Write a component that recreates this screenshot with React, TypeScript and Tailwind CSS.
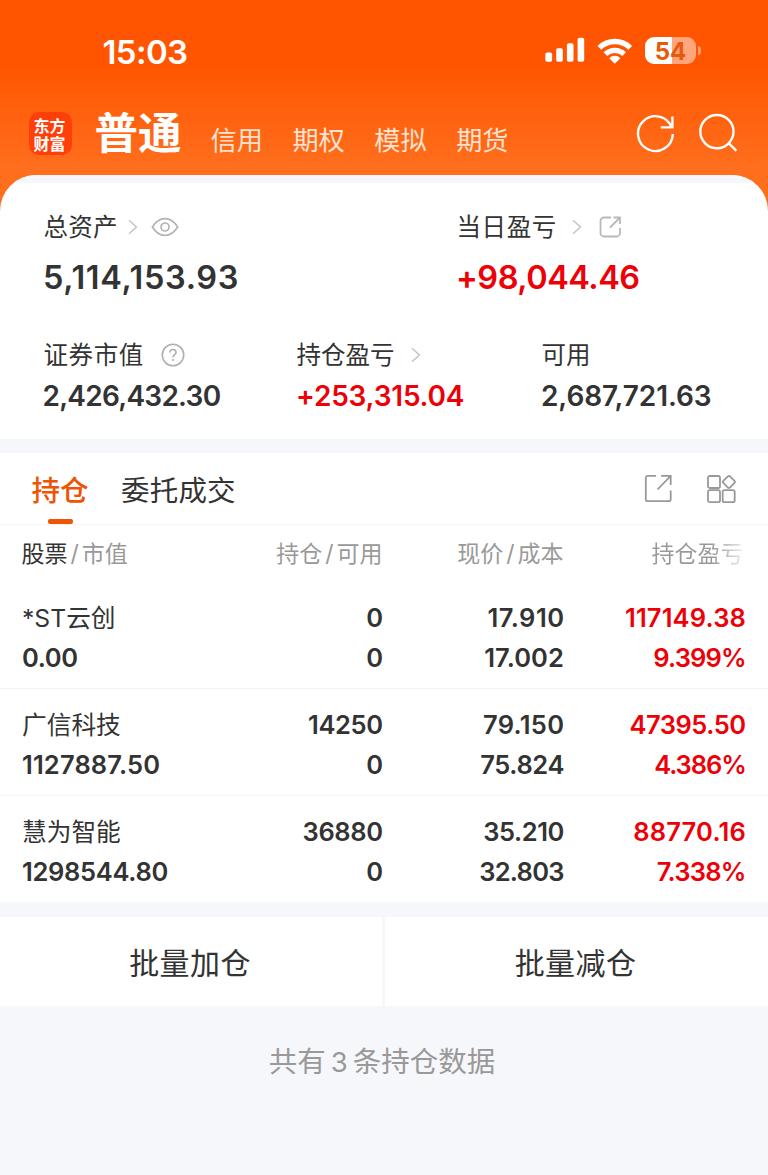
import React from "react";

const num = "font-['Inter','Noto_Sans_CJK_SC',sans-serif] font-semibold whitespace-nowrap";

type Cell = { text: string; track?: string };

type Holding = {
  name: string;
  value: Cell;
  amount: Cell;
  usable: Cell;
  price: Cell;
  cost: Cell;
  profit: Cell;
  rate: Cell;
};

const holdings: Holding[] = [
  {
    name: "*ST云创",
    value: { text: "0.00", track: "tracking-[-0.4px]" },
    amount: { text: "0" },
    usable: { text: "0" },
    price: { text: "17.910", track: "tracking-[0.5px] -mr-[0.5px]" },
    cost: { text: "17.002", track: "tracking-[0.1px]" },
    profit: { text: "117149.38", track: "tracking-[0.15px]" },
    rate: { text: "9.399%", track: "tracking-[-0.85px] mr-[0.3px]" },
  },
  {
    name: "广信科技",
    value: { text: "1127887.50", track: "tracking-[0.15px]" },
    amount: { text: "14250", track: "tracking-[-0.4px] mr-[0.4px]" },
    usable: { text: "0" },
    price: { text: "79.150", track: "tracking-[0.3px] -mr-[0.3px]" },
    cost: { text: "75.824", track: "tracking-[-0.4px]" },
    profit: { text: "47395.50", track: "tracking-[-0.5px] mr-[0.5px]" },
    rate: { text: "4.386%", track: "tracking-[-1.1px] mr-[0.3px]" },
  },
  {
    name: "慧为智能",
    value: { text: "1298544.80", track: "tracking-[-0.3px]" },
    amount: { text: "36880", track: "tracking-[-0.4px] mr-[0.4px]" },
    usable: { text: "0" },
    price: { text: "35.210", track: "tracking-[-0.4px]" },
    cost: { text: "32.803", track: "tracking-[-0.75px] mr-[0.3px]" },
    profit: { text: "88770.16", track: "tracking-[0.2px]" },
    rate: { text: "7.338%", track: "tracking-[-0.75px] mr-[0.3px]" },
  },
];

function Chevron({ className = "" }: { className?: string }) {
  return (
    <svg className={className} width="10" height="16" viewBox="0 0 10 16" fill="none" stroke="#c4c4c4" strokeWidth="1.5">
      <path d="M1 1.2 8.4 8 1 14.8" />
    </svg>
  );
}

function StatusBar() {
  return (
    <div className="flex h-[103px] items-start justify-between pl-[102.5px] pr-[67px]">
      <div className={`${num} mt-[32px] text-[33px] leading-[40px] tracking-[-0.6px]`}>15:03</div>
      <div className="mt-[37px] flex items-start">
        <svg width="40" height="26" viewBox="0 0 40 26" fill="#fff">
          <rect x="0.3" y="15.4" width="6.8" height="9.4" rx="1.8" />
          <rect x="11.2" y="11.2" width="6.6" height="13.6" rx="1.8" />
          <rect x="21.9" y="6.2" width="6.6" height="18.6" rx="1.8" />
          <rect x="32.6" y="0.7" width="6.6" height="24.1" rx="1.8" />
        </svg>
        <svg className="ml-[12px]" width="36" height="28" viewBox="0 0 36 28" fill="none" stroke="#fff" strokeWidth="5.3">
          <path d="M2.4 10.8a22 22 0 0 1 30.8 0" />
          <path d="M8.4 17.1a13.600 13.600 0 0 1 18.800 0" />
          <path d="M17.8 26.8 12.2 21.200a7.900 7.900 0 0 1 11.200 0z" fill="#fff" stroke="none" />
        </svg>
        <div className="ml-[12px] flex items-center">
          <div className="flex h-[27px] w-[51px] items-center justify-center rounded-[9px] bg-[linear-gradient(90deg,#fff_53%,#ffa67d_53%)]">
            <span className="mt-[1px] font-['Inter',sans-serif] text-[24px] font-bold leading-[27px] text-[#e8590c]">54</span>
          </div>
          <div className="ml-[1.5px] h-[9px] w-[3.5px] rounded-r-full bg-[#ff9a6a]" />
        </div>
      </div>
    </div>
  );
}

function NavBar() {
  return (
    <div className="flex h-[72px] items-start pl-[28.5px]">
      <div className="mt-[9px] flex size-[43px] items-center justify-center rounded-[10px] bg-[#ff3f0a] font-['Noto_Sans_CJK_SC',sans-serif]">
        <div className="w-[33px] text-[16px] font-bold leading-[18px]">东方财富</div>
      </div>
      <div className="ml-[23px] mt-[1px] text-[43.5px] font-bold leading-[58px]">普通</div>
      <div className="ml-[29px] mt-[20px] flex gap-[29.5px] text-[26.2px] leading-[36px] text-[#ffe2d2]">
        <span>信用</span>
        <span>期权</span>
        <span>模拟</span>
        <span>期货</span>
      </div>
      <svg className="ml-[127px] mt-[10px]" width="40" height="42" viewBox="0 0 40 42" fill="none" stroke="#fff" strokeWidth="2.4">
        <path d="M36.800 21A17.400 17.400 0 1 1 35.600 14.200" />
        <path d="M36.400 3.400v11H24.800" />
      </svg>
      <svg className="ml-[22px] mt-[10px]" width="40" height="42" viewBox="0 0 40 42" fill="none" stroke="#fff" strokeWidth="2.4">
        <circle cx="18.9" cy="18.6" r="16.6" />
        <path d="m30.4 29.8 8 8" />
      </svg>
    </div>
  );
}

function Summary() {
  return (
    <div className="h-[264px] overflow-hidden rounded-t-[36px] bg-white">
      <div className="h-[8px] bg-[#f6f7fa]" />
      <div className="mt-[29px] flex h-[30px] items-center pl-[43.5px] text-[24.5px]">
        <div className="flex w-[413px] items-center">
          <span className="tracking-[0.3px]">总资产</span>
          <Chevron className="ml-[10px]" />
          <svg className="ml-[13px]" width="28" height="20" viewBox="0 0 28 20" fill="none" stroke="#b4b4b4" strokeWidth="1.7">
            <path d="M1.4 10C4.600 4.600 9 1.600 14 1.600S23.400 4.600 26.600 10C23.400 15.400 19 18.400 14 18.400S4.600 15.400 1.400 10z" />
            <circle cx="14" cy="10" r="4" />
          </svg>
        </div>
        <span className="tracking-[0.6px]">当日盈亏</span>
        <Chevron className="ml-[15px]" />
        <svg className="ml-[17px]" width="24" height="22" viewBox="0 0 24 22" fill="none" stroke="#b8b8b8" strokeWidth="1.8">
          <path d="M12 1.500H5A3.500 3.500 0 0 0 1.500 5V17A3.500 3.500 0 0 0 5 20.500H17.500A3.500 3.500 0 0 0 21 17V12" />
          <path d="M14.500 1.500H21V8M21 1.500 11 11.500" />
        </svg>
      </div>
      <div className={`${num} mt-[16px] flex h-[40px] items-center pl-[43px] text-[32.5px]`}>
        <span className="w-[413px] tracking-[0.65px]">5,114,153.93</span>
        <span className="tracking-[-0.5px] text-[#ed0007]">+98,044.46</span>
      </div>
      <div className="mt-[42px] flex h-[30px] items-center pl-[43.5px] text-[24.5px]">
        <div className="flex w-[253px] items-center">
          <span className="tracking-[0.6px]">证券市值</span>
          <svg className="ml-[17px]" width="24" height="24" viewBox="0 0 24 24" fill="none" stroke="#b0b0b0" strokeWidth="1.6">
            <circle cx="12" cy="12" r="10.700" />
            <path d="M9 9.600C9 7.600 10.300 6.500 12 6.500S15 7.700 15 9.400C15 11.500 12 11.700 12 14.200" />
            <path d="M12 16v2" />
          </svg>
        </div>
        <div className="flex w-[245px] items-center">
          <span>持仓盈亏</span>
          <Chevron className="ml-[16px]" />
        </div>
        <span>可用</span>
      </div>
      <div className={`${num} mt-[9px] flex h-[34px] items-center pl-[42.5px] text-[28px]`}>
        <span className="w-[253.5px] tracking-[-0.75px]">2,426,432.30</span>
        <span className="w-[245px] tracking-[-0.2px] text-[#ed0007]">+253,315.04</span>
        <span className="tracking-[-0.1px]">2,687,721.63</span>
      </div>
    </div>
  );
}

function Tabs() {
  return (
    <div className="flex h-[72px] items-start border-b border-[#f3f3f5] bg-white pl-[31.5px] text-[28.5px] leading-[40px]">
      <div className="flex flex-col items-center">
        <span className="mt-[18px] font-medium text-[#ee5404]">持仓</span>
        <div className="mt-[8px] h-[5px] w-[25px] rounded-[2px] bg-[#ee5404]" />
      </div>
      <span className="ml-[32.5px] mt-[18px] tracking-[0.2px]">委托成交</span>
      <svg className="ml-[408px] mt-[21px]" width="30" height="30" viewBox="0 0 30 30" fill="none" stroke="#999" strokeWidth="1.800">
        <path d="M12 1.800H3.800A2 2 0 0 0 1.800 3.800V25.200A2 2 0 0 0 3.800 27.200H24.700A2 2 0 0 0 26.700 25.200V16.500" />
        <path d="M17 1.800H26.700V11M26.700 1.800 13.500 15.500" />
      </svg>
      <svg className="ml-[32px] mt-[21px]" width="32" height="30" viewBox="0 0 32 30" fill="none" stroke="#999" strokeWidth="1.800">
        <rect x="2" y="2" width="12" height="12" rx="1.800" />
        <rect x="2" y="16.200" width="12" height="12" rx="1.800" />
        <rect x="16.700" y="16.200" width="12" height="12" rx="1.800" />
        <rect x="18.200" y="3.200" width="9.400" height="9.400" rx="1.800" transform="rotate(45 22.900 7.900)" />
      </svg>
    </div>
  );
}

function Column({ cells, className }: { cells: Cell[]; className: string }) {
  return (
    <div className={`${num} ${className} text-right text-[25.5px] leading-[40px]`}>
      {cells.map((c, i) => (
        <div key={i} className={c.track}>
          {c.text}
        </div>
      ))}
    </div>
  );
}

function Table() {
  return (
    <div className="bg-white">
      <div className="flex h-[57px] items-center pl-[21.5px] pt-[1px] text-[23px] text-[#999]">
        <div className="w-[161px]">
          <span className="text-[#333]">股票</span>
          <span className="px-[3px]">/</span>市值
        </div>
        <div className="w-[200px] text-right">
          持仓<span className="px-[3px]">/</span>可用
        </div>
        <div className="w-[181px] text-right">
          现价<span className="px-[3px]">/</span>成本
        </div>
        <div className="w-[180px] bg-[linear-gradient(90deg,#999_82%,#fff_104%)] bg-clip-text text-right text-transparent">持仓盈亏</div>
      </div>
      {holdings.map((h) => (
        <div key={h.name} className="flex h-[107px] border-b border-[#f4f4f6] pl-[22px] pt-[15.5px] last:h-[106px] last:border-0">
          <div className="w-[161px]">
            <div className="h-[40px] text-[24.7px] leading-[40px]">{h.name}</div>
            <div className={`${num} ${h.value.track} text-[25.5px] leading-[40px]`}>{h.value.text}</div>
          </div>
          <Column className="w-[200px]" cells={[h.amount, h.usable]} />
          <Column className="w-[181px]" cells={[h.price, h.cost]} />
          <Column className="w-[182px] text-[#ed0007]" cells={[h.profit, h.rate]} />
        </div>
      ))}
    </div>
  );
}

export default function App() {
  return (
    <div className="h-[1175px] w-[768px] overflow-hidden bg-[#f6f7fa] font-['Inter','Noto_Sans_CJK_SC',sans-serif] text-[#333]">
      <div className="bg-[linear-gradient(180deg,#ff5500_0px,#ff5500_65px,#ff6e1c_165px,#ff6e1c_215px)]">
        <div className="text-white">
          <StatusBar />
          <NavBar />
        </div>
        <Summary />
      </div>
      <div className="h-[14px]" />
      <Tabs />
      <Table />
      <div className="mt-[15px] flex h-[89px] gap-[3px] text-[30px]">
        <div className="flex w-[382px] items-center justify-center bg-white pr-[2px] pt-[3px] tracking-[0.4px]">批量加仓</div>
        <div className="flex flex-1 items-center justify-center bg-white pr-[2px] pt-[3px] tracking-[0.4px]">批量减仓</div>
      </div>
      <div className="mt-[36px] pr-[4px] text-center text-[28.5px] leading-[40px] text-[#999]">
        共有<span className="px-[5px] text-[27.5px]">3</span>条持仓数据
      </div>
    </div>
  );
}
